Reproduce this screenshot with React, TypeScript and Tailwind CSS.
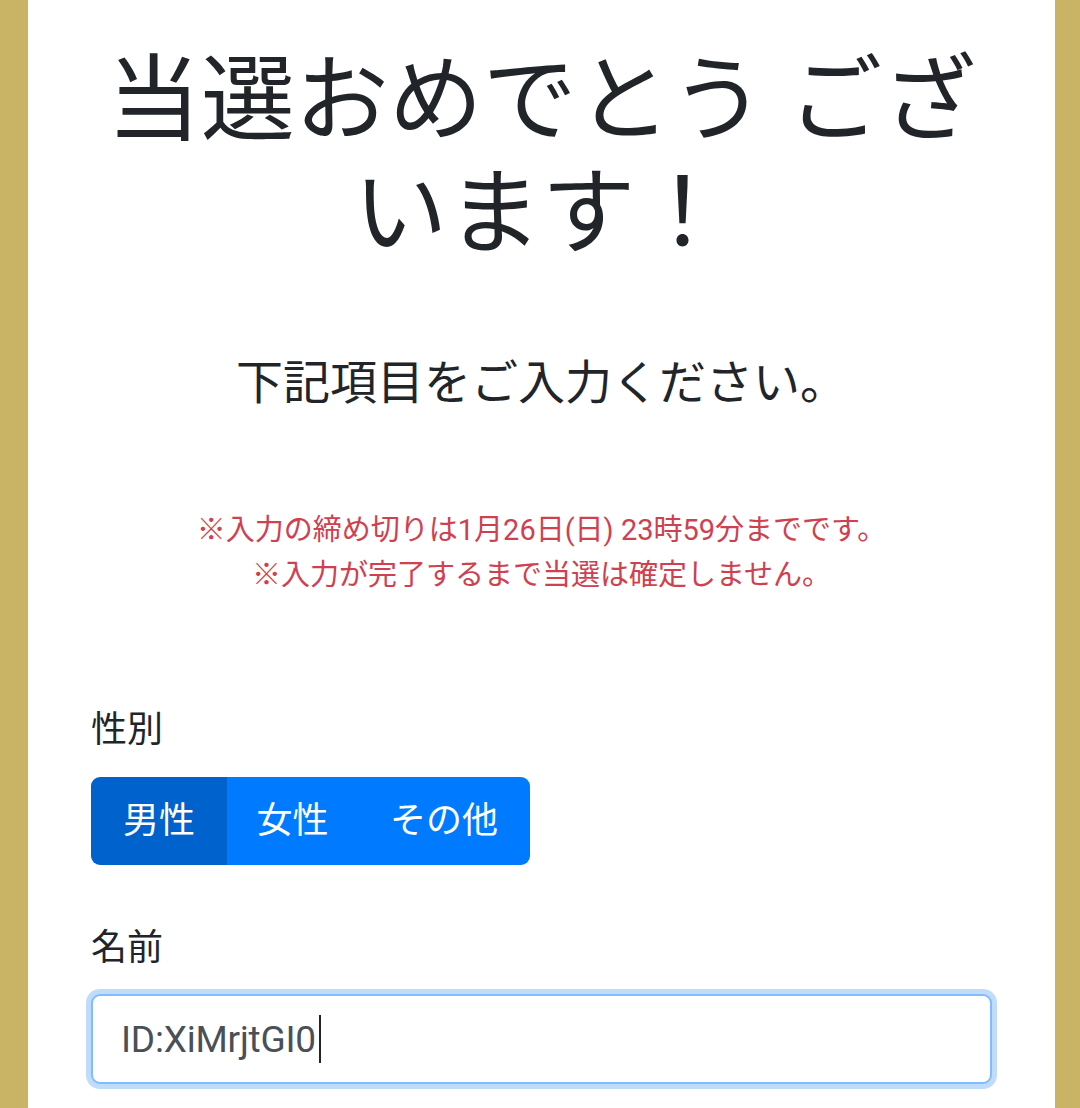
import { useState } from 'react';

export default function App() {
  const [gender, setGender] = useState('male');
  const [name, setName] = useState('ID:XiMrjtGI0');

  const genders = [
    { key: 'male', label: '男性', w: 'w-[136px]' },
    { key: 'female', label: '女性', w: 'w-[131px]' },
    { key: 'other', label: 'その他', w: 'w-[172px]' },
  ];

  return (
    <div
      className="min-h-[1108px] bg-[#c8b464] px-[28px] pr-[25px]"
      style={{ fontFamily: "Roboto, 'Noto Sans CJK JP', sans-serif" }}
    >
      <div className="min-h-[1108px] bg-white px-[63px] pt-[45px] text-[#212529]">
        {/* Heading */}
        <h1 className="text-center text-[94px] leading-[113px] font-normal">
          当選おめでとう ございます！
        </h1>
        <p className="mt-[84px] text-center text-[47px] leading-[56px]">
          下記項目をご入力ください。
        </p>

        {/* Notes */}
        <div className="mt-[97px] text-center text-[29px] leading-[45px] text-[#d0404f]">
          <p>※入力の締め切りは1月26日(日) 23時59分までです。</p>
          <p>※入力が完了するまで当選は確定しません。</p>
        </div>

        {/* Gender */}
        <div className="mt-[105px]">
          <label className="block text-[36px] leading-[54px]">性別</label>
          <div className="mt-[20px] inline-flex overflow-hidden rounded-[9px]">
            {genders.map((g) => (
              <button
                key={g.key}
                onClick={() => setGender(g.key)}
                className={`${g.w} h-[88px] text-[36px] text-white ${
                  gender === g.key ? 'bg-[#0062cc]' : 'bg-[#007bff]'
                }`}
              >
                {g.label}
              </button>
            ))}
          </div>
        </div>

        {/* Name */}
        <div className="mt-[56px]">
          <label className="block text-[36px] leading-[54px]">名前</label>
          <div className="relative mt-[19px]">
            <input
              value={name}
              onChange={(e) => setName(e.target.value)}
              className="block h-[90px] w-full rounded-[9px] border-2 border-[#80bdff] bg-white px-[28px] text-[37px] tracking-[-0.2px] text-[#495057] outline-none shadow-[0_0_0_5px_#c0dcfa]"
            />
            {/* caret */}
            <span className="absolute left-[228px] top-[21px] h-[48px] w-[1.5px] bg-[#212529]" />
          </div>
        </div>
      </div>
    </div>
  );
}
